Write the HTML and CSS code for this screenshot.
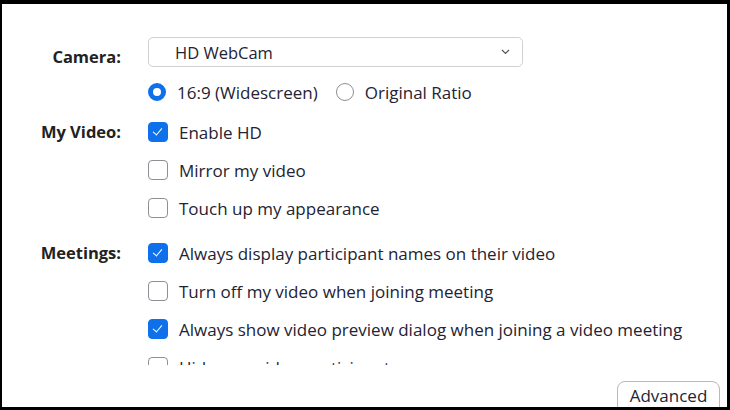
FILE: index.html
```html
<!DOCTYPE html>
<html lang="en">
<head>
    <meta charset="UTF-8">
    <title>Video settings</title>
    <link rel="stylesheet" href="styles.css">
</head>
<body>
    <div id="frame">
        <div id="settings">
            <div class="group">
                <div class="label label-camera">Camera:</div>
                <div class="controls">
                    <div class="select">
                        <span>HD WebCam</span>
                        <svg class="chevron" width="9" height="6" viewBox="0 0 9 6"><path d="M1 1l3.5 3.5L8 1" fill="none" stroke="#555" stroke-width="1.2"/></svg>
                    </div>
                    <div class="row radios">
                        <span class="radio on"></span>
                        <span class="txt">16:9 (Widescreen)</span>
                        <span class="radio"></span>
                        <span class="txt">Original Ratio</span>
                    </div>
                </div>
            </div>

            <div class="group">
                <div class="label">My Video:</div>
                <div class="controls">
                    <div class="row"><span class="check on"></span><span class="txt">Enable HD</span></div>
                    <div class="row"><span class="check"></span><span class="txt">Mirror my video</span></div>
                    <div class="row"><span class="check"></span><span class="txt">Touch up my appearance</span></div>
                </div>
            </div>

            <div class="group meetings">
                <div class="label">Meetings:</div>
                <div class="controls">
                    <div class="row"><span class="check on"></span><span class="txt">Always display participant names on their video</span></div>
                    <div class="row"><span class="check"></span><span class="txt">Turn off my video when joining meeting</span></div>
                    <div class="row"><span class="check on"></span><span class="txt">Always show video preview dialog when joining a video meeting</span></div>
                    <div class="row"><span class="check"></span><span class="txt">Hide non-video participants</span></div>
                </div>
            </div>
        </div>
        <div id="footer">
            <div class="btn">Advanced</div>
        </div>
    </div>
</body>
</html>
```

FILE: styles.css
```css
body{
    margin: 0;
    background: white;
    font-family: "Open Sans", "Noto Sans", sans-serif;
    color: #232333;
}
#frame{
    width: 730px;
    height: 410px;
    box-sizing: border-box;
    border-top: 4px solid black;
    border-left: 2px solid black;
    border-right: 3px solid black;
    border-bottom: 3px solid black;
    display: flex;
    flex-direction: column;
    overflow: hidden;
}
#settings{
    flex: none;
    height: 361px;
    overflow: hidden;
    padding-top: 33px;
    box-sizing: border-box;
}
.group{
    display: grid;
    grid-template-columns: 119px 1fr;
    column-gap: 27px;
    margin-bottom: 2px;
}
.meetings{
    margin-top: 7px;
}
.label{
    text-align: right;
    font-weight: 700;
    font-size: 16.5px;
    line-height: 38px;
    color: #222;
}
.label-camera{
    line-height: 20px;
    padding-top: 10px;
}
.controls{
    display: flex;
    flex-direction: column;
}
.select{
    width: 375px;
    height: 30px;
    box-sizing: border-box;
    border: 1px solid #cfcfd4;
    border-radius: 5px;
    display: flex;
    align-items: center;
    justify-content: space-between;
    padding: 0 12px 0 26px;
    font-size: 16.5px;
    margin-bottom: 6px;
}
.row{
    height: 38px;
    display: flex;
    align-items: center;
    font-size: 17px;
}
.txt{
    margin-left: 11px;
    white-space: nowrap;
}
.radios .txt{
    margin-right: 18px;
}
.radio{
    width: 18px;
    height: 18px;
    box-sizing: border-box;
    border: 1.5px solid #8f8f95;
    border-radius: 50%;
    flex: none;
}
.radio.on{
    border: 5px solid #0e71eb;
}
.check{
    width: 20px;
    height: 20px;
    box-sizing: border-box;
    border: 1.5px solid #8f8f95;
    border-radius: 4px;
    flex: none;
    position: relative;
}
.check.on{
    background: #0e71eb;
    border-color: #0e71eb;
}
.check.on::after{
    content: "";
    position: absolute;
    left: 6px;
    top: 3px;
    width: 4px;
    height: 8px;
    border-right: 1.5px solid white;
    border-bottom: 1.5px solid white;
    transform: rotate(40deg);
}
#footer{
    flex: 1;
    display: flex;
    justify-content: flex-end;
    align-items: flex-start;
    padding: 16px 7px 0 0;
}
.btn{
    width: 103px;
    height: 34px;
    box-sizing: border-box;
    border: 1px solid #b8b8bd;
    border-radius: 8px;
    text-align: center;
    line-height: 28px;
    font-size: 17px;
}
```
